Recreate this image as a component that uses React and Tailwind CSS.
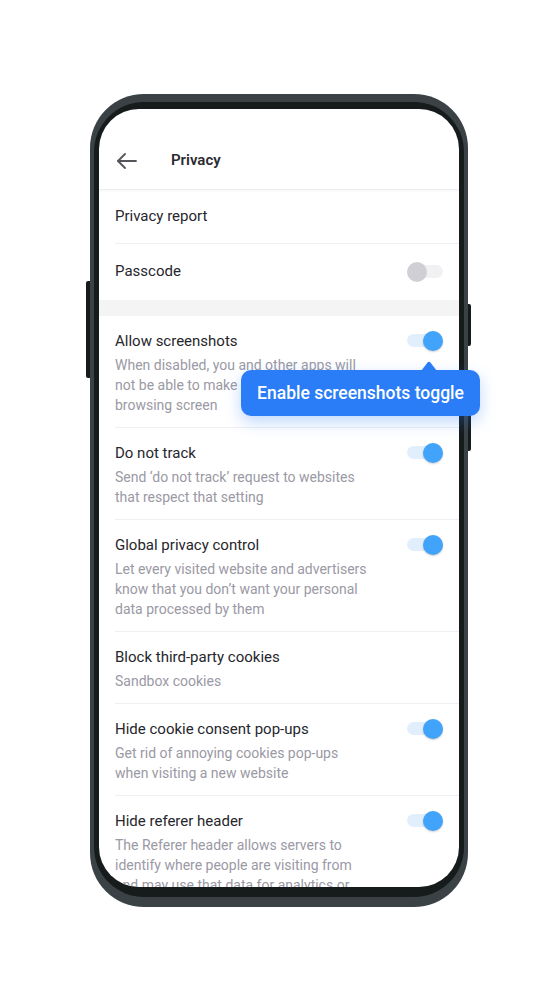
import React from 'react';

const settings = [
  {
    title: 'Allow screenshots',
    desc: 'When disabled, you and other apps will not be able to make screenshots of the browsing screen',
    on: true,
  },
  {
    title: 'Do not track',
    desc: 'Send ‘do not track’ request to websites that respect that setting',
    on: true,
  },
  {
    title: 'Global privacy control',
    desc: 'Let every visited website and advertisers know that you don’t want your personal data processed by them',
    on: true,
  },
  {
    title: 'Block third-party cookies',
    desc: 'Sandbox cookies',
  },
  {
    title: 'Hide cookie consent pop-ups',
    desc: 'Get rid of annoying cookies pop-ups when visiting a new website',
    on: true,
  },
  {
    title: 'Hide referer header',
    desc: 'The Referer header allows servers to identify where people are visiting from and may use that data for analytics or logging',
    on: true,
  },
];

function Toggle({ on }) {
  return (
    <div className="relative w-[36px] h-[20px] shrink-0">
      <div className={`absolute left-0 right-0 top-[3.5px] h-[13px] rounded-full ${on ? 'bg-[#e1effd]' : 'bg-[#f1f1f3]'}`} />
      <div
        className={`absolute top-0 w-[20px] h-[20px] rounded-full ${
          on ? 'right-0 bg-[#42a3fa] shadow-[0_1px_2px_rgba(0,0,0,0.2)]' : 'left-0 bg-[#d1cfd6]'
        }`}
      />
    </div>
  );
}

function SettingRow({ title, desc, on }) {
  return (
    <div className="pl-4 shrink-0">
      <div className="flex items-start justify-between pr-4 pt-[14px] pb-[12px] border-b border-[#efeff1]">
        <div className="max-w-[256px]">
          <div className="text-[15px] leading-[22px] text-[#26262c]">{title}</div>
          <div className="mt-[3px] text-[14px] leading-[20px] text-[#9a99a4]">{desc}</div>
        </div>
        {on !== undefined && (
          <div className="mt-[1px]">
            <Toggle on={on} />
          </div>
        )}
      </div>
    </div>
  );
}

// Telefono con la pantalla de privacidad y un globo de ayuda encima.
export default function App() {
  return (
    <div className="relative w-[558px] h-[1000px] bg-white font-['Roboto',sans-serif] flex items-center justify-center">
      <div className="relative">
        {/* botones laterales */}
        <div className="absolute left-[-4px] top-[187px] w-[4px] h-[97px] rounded-l-[2px] bg-[#161b1c]" />
        <div className="absolute right-[-3px] top-[210px] w-[3px] h-[42px] rounded-r-[2px] bg-[#161b1c]" />
        <div className="absolute right-[-3px] top-[319px] w-[3px] h-[38px] rounded-r-[2px] bg-[#161b1c]" />

        <div className="w-[378px] h-[813px] rounded-[54px] bg-[#3b4245] pt-[8px] px-[4px] pb-[10px]">
          <div className="h-full rounded-[50px] bg-[#161b1c] pt-[7px] px-[5px] pb-[10px]">
            <div className="h-full rounded-[40px] bg-white overflow-hidden flex flex-col">
              <header className="h-[81px] shrink-0 pt-[24px] flex items-center border-b border-[#eeeef0] shadow-[0_1px_3px_rgba(0,0,0,0.04)]">
                <div className="w-[72px] pl-[17px]">
                  <svg width="22" height="16" viewBox="0 0 22 16" fill="none" stroke="#55555c" strokeWidth="1.8" strokeLinecap="round" strokeLinejoin="round">
                    <path d="M20 8H2" />
                    <path d="M9 1L2 8l7 7" />
                  </svg>
                </div>
                <span className="text-[15px] font-semibold text-[#2a2a30]">Privacy</span>
              </header>

              <div className="pl-4 shrink-0">
                <div className="h-[54px] flex items-center border-b border-[#efeff1] text-[15px] text-[#26262c]">
                  Privacy report
                </div>
              </div>
              <div className="h-[56px] shrink-0 flex items-center justify-between px-4 text-[15px] text-[#26262c]">
                Passcode
                <Toggle on={false} />
              </div>
              <div className="h-[16px] shrink-0 bg-[#f4f4f5]" />

              {settings.map((s) => (
                <SettingRow key={s.title} {...s} />
              ))}
            </div>
          </div>
        </div>
      </div>

      {/* globo de ayuda */}
      <div className="absolute left-[241px] top-[370px] w-[239px] h-[46px] rounded-[10px] bg-[#2a7df6] shadow-[0_6px_16px_rgba(42,125,246,0.3)] flex items-center justify-center">
        <svg className="absolute left-[180px] top-[-9px]" width="16" height="10" viewBox="0 0 16 10">
          <path d="M0 10 L6.6 1.6 Q8 0 9.4 1.6 L16 10 Z" fill="#2a7df6" />
        </svg>
        <span className="text-[17.5px] font-medium text-white">Enable screenshots toggle</span>
      </div>
    </div>
  );
}
